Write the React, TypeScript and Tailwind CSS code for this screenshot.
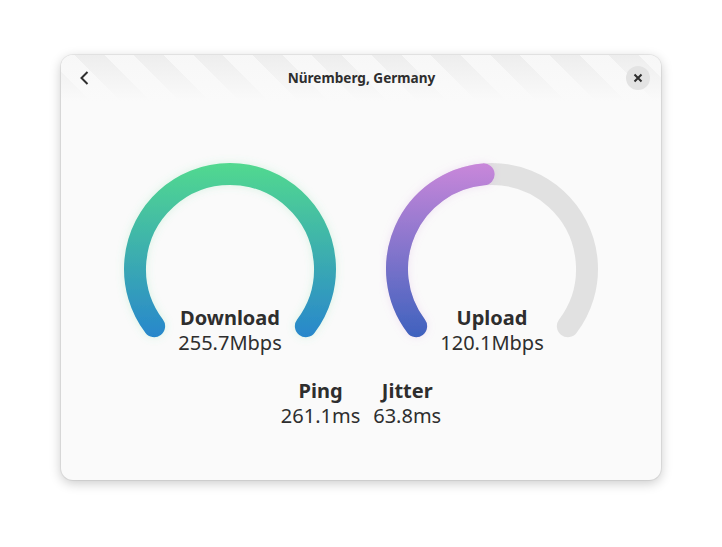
import React from "react";

const R = 95;
const CX = 116;
const CY = 116;

function pt(a: number) {
  const rad = (a * Math.PI) / 180;
  return [CX + R * Math.sin(rad), CY - R * Math.cos(rad)];
}

function arc(a1: number, a2: number) {
  const [x1, y1] = pt(a1);
  const [x2, y2] = pt(a2);
  const large = a2 - a1 > 180 ? 1 : 0;
  return `M ${x1.toFixed(2)} ${y1.toFixed(2)} A ${R} ${R} 0 ${large} 1 ${x2.toFixed(2)} ${y2.toFixed(2)}`;
}

const START = -127;
const END = 127;

function Gauge({
  id,
  top,
  bottom,
  glow,
  frac,
  label,
  value,
}: {
  id: string;
  top: string;
  bottom: string;
  glow: string;
  frac: number;
  label: string;
  value: string;
}) {
  const endA = START + (END - START) * frac;
  return (
    <div className="relative w-[232px] h-[200px]">
      <svg width="232" height="200" viewBox="0 0 232 200" className="block">
        <defs>
          <linearGradient id={`g-${id}`} gradientUnits="userSpaceOnUse" x1="0" y1={CY - R - 11} x2="0" y2={CY + 68}>
            <stop offset="0" stopColor={top} />
            <stop offset="1" stopColor={bottom} />
          </linearGradient>
          <filter id={`f-${id}`} x="-20%" y="-20%" width="140%" height="140%">
            <feGaussianBlur in="SourceAlpha" stdDeviation="4" result="b" />
            <feFlood floodColor={glow} floodOpacity="0.22" />
            <feComposite in2="b" operator="in" result="s" />
            <feMerge>
              <feMergeNode in="s" />
              <feMergeNode in="SourceGraphic" />
            </feMerge>
          </filter>
        </defs>
        {frac < 1 && (
          <path d={arc(START, END)} fill="none" stroke="#e1e1e1" strokeWidth="22" strokeLinecap="round" />
        )}
        <path
          d={arc(START, endA)}
          fill="none"
          stroke={`url(#g-${id})`}
          strokeWidth="22"
          strokeLinecap="round"
          filter={`url(#f-${id})`}
        />
      </svg>
      <div className="absolute left-0 right-0 top-[152px] flex flex-col items-center text-[20px] leading-[25px] text-[#2e2e2e]">
        <div className="font-bold">{label}</div>
        <div>{value}</div>
      </div>
    </div>
  );
}

export default function App() {
  return (
    <div className="min-h-[547px] w-full bg-white pt-[55px] font-['Noto_Sans','Open_Sans',sans-serif]">
      <div className="mx-auto w-[600px] h-[425px] rounded-[12px] bg-[#fafafa] overflow-hidden shadow-[0_3px_12px_rgba(0,0,0,0.22),0_0_0_1px_rgba(0,0,0,0.06)] flex flex-col">
        <div className="relative h-[46px] shrink-0">
          <div className="absolute inset-0 bg-[repeating-linear-gradient(45deg,#ececec_0px,#ececec_21px,#f7f7f7_21px,#f7f7f7_42px)]" />
          <div className="absolute inset-0 bg-gradient-to-b from-[rgba(250,250,250,0.1)] to-[#fafafa]" />
          <div className="relative flex h-full items-center justify-between px-[12px]">
            <div className="flex h-[24px] w-[24px] items-center justify-center">
              <svg width="16" height="16" viewBox="0 0 16 16">
                <path d="M10.5 2 L4.5 8 L10.5 14" fill="none" stroke="#2e2e2e" strokeWidth="2" />
              </svg>
            </div>
            <div className="text-[13.6px] font-bold text-[#2e2e2e]">Nüremberg, Germany</div>
            <div className="mr-[-1px] flex h-[24px] w-[24px] items-center justify-center rounded-full bg-[#e3e3e3]">
              <svg width="10" height="10" viewBox="0 0 10 10">
                <path d="M1.5 1.5 L8.5 8.5 M8.5 1.5 L1.5 8.5" stroke="#2e2e2e" strokeWidth="2" />
              </svg>
            </div>
          </div>
        </div>
        <div className="mt-[52px] flex justify-center gap-[30px]">
          <Gauge
            id="dl"
            top="#52d98f"
            bottom="#2887cc"
            glow="#5bd98f"
            frac={1}
            label="Download"
            value="255.7Mbps"
          />
          <Gauge
            id="ul"
            top="#c987da"
            bottom="#3f62be"
            glow="#c987da"
            frac={0.48}
            label="Upload"
            value="120.1Mbps"
          />
        </div>
        <div className="mt-[25px] flex justify-center gap-[13px] text-[20px] leading-[25px] text-[#2e2e2e]">
          <div className="flex flex-col items-center">
            <div className="font-bold">Ping</div>
            <div>261.1ms</div>
          </div>
          <div className="flex flex-col items-center">
            <div className="font-bold">Jitter</div>
            <div>63.8ms</div>
          </div>
        </div>
      </div>
    </div>
  );
}
